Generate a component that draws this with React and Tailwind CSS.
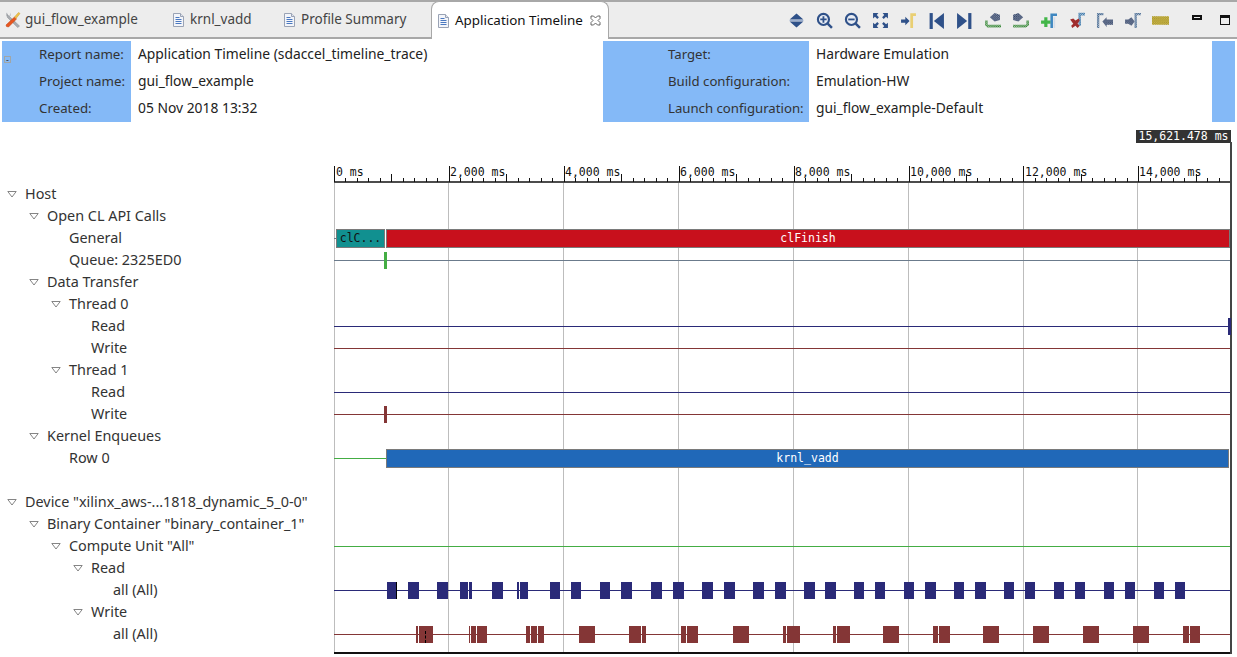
const FONT = "font-['Noto_Sans',sans-serif]";
const MONO = "font-['DejaVu_Sans_Mono',monospace]";

const NAVY = "#2a2a78";
const BROWN = "#843636";
const GREEN = "#44ad44";

const readBars = [
  [387, 397], [408, 419], [437, 448], [460, 468], [469, 472], [492, 503], [517, 519], [520, 528],
  [550, 560], [571, 581], [600, 610], [621, 632], [651, 662], [673, 684], [702, 713], [724, 735],
  [753, 764], [775, 786], [804, 815], [825, 836], [854, 864], [875, 885], [904, 914], [925, 936],
  [954, 964], [975, 986], [1004, 1014], [1025, 1035], [1054, 1064], [1075, 1085], [1104, 1114],
  [1125, 1135], [1154, 1164], [1175, 1185],
];

const writeBars = [
  [416, 418], [419, 433], [469, 470], [471, 476], [477, 487], [526, 530], [531, 537], [538, 544],
  [579, 595], [629, 641], [642, 646], [681, 686], [687, 698], [733, 749], [783, 786], [787, 800],
  [833, 836], [837, 850], [883, 899], [933, 938], [939, 950], [983, 999], [1033, 1049], [1083, 1099],
  [1133, 1149], [1183, 1189], [1190, 1200],
];

const tree = [
  { depth: 0, open: true, label: "Host" },
  { depth: 1, open: true, label: "Open CL API Calls" },
  { depth: 2, label: "General" },
  { depth: 2, label: "Queue: 2325ED0" },
  { depth: 1, open: true, label: "Data Transfer" },
  { depth: 2, open: true, label: "Thread 0" },
  { depth: 3, label: "Read" },
  { depth: 3, label: "Write" },
  { depth: 2, open: true, label: "Thread 1" },
  { depth: 3, label: "Read" },
  { depth: 3, label: "Write" },
  { depth: 1, open: true, label: "Kernel Enqueues" },
  { depth: 2, label: "Row 0" },
  { depth: 0, label: "" },
  { depth: 0, open: true, label: 'Device "xilinx_aws-...1818_dynamic_5_0-0"' },
  { depth: 1, open: true, label: 'Binary Container "binary_container_1"' },
  { depth: 2, open: true, label: 'Compute Unit "All"' },
  { depth: 3, open: true, label: "Read" },
  { depth: 4, label: "all (All)" },
  { depth: 3, open: true, label: "Write" },
  { depth: 4, label: "all (All)" },
];

const indent = ["pl-[8px]", "pl-[30px]", "pl-[52px]", "pl-[74px]", "pl-[96px]"];

const gridLines = [0, 114, 229, 344, 459, 574, 689, 803];

const rulerLabels = [
  "0 ms", "2,000 ms", "4,000 ms", "6,000 ms", "8,000 ms", "10,000 ms", "12,000 ms", "14,000 ms",
];

const DocIcon = () => (
  <svg width="11" height="14" viewBox="0 0 11 14" className="shrink-0">
    <path d="M.5.5h7l3 3v10H.5z" fill="#f3f5fa" stroke="#9aa3b5" />
    <path d="M7.5.5v3h3" fill="#dfe3ec" stroke="#9aa3b5" />
    <path d="M2.5 4.5h4M2.5 6.5h6M2.5 8.5h6M2.5 10.5h6" stroke="#4a78c0" />
  </svg>
);

// crossed wrench and screwdriver
const ToolsIcon = () => (
  <svg width="16" height="17" viewBox="0 0 16 17" className="shrink-0">
    <path d="M2 1.500l1 3-1.500 1L1 2.500zM6 1.500L5.500 5 4 5.500z" fill="#b9bcc0" />
    <path d="M2 3.500l2.500 2 10 9.500-1.800 1.500L2.500 6.500z" fill="#a9acb1" stroke="#85888c" strokeWidth=".5" />
    <path d="M1.500 15.500l-.5-1.500 8.500-8 2 2-8 8z" fill="#e8561f" stroke="#b83c10" strokeWidth=".5" />
    <path d="M9.500 6l4-4.500 1.500 1-4 5z" fill="#f2c24a" stroke="#c79a2a" strokeWidth=".5" />
  </svg>
);

const CloseIcon = () => (
  <svg width="11" height="11" viewBox="0 0 11 11" className="shrink-0">
    <path
      d="M1 1h2.500l2 2 2-2H10v2.500l-2 2 2 2V10H7.500l-2-2-2 2H1V7.500l2-2-2-2z"
      fill="#fff"
      stroke="#555"
      strokeWidth=".9"
    />
  </svg>
);

const Tab = ({ icon, label, className }) => (
  <div className={`flex items-center h-full whitespace-nowrap text-[#444] ${className}`}>
    {icon}
    <span>{label}</span>
  </div>
);

const Checker = ({ id, color, bg }) => (
  <pattern id={id} width="2" height="2" patternUnits="userSpaceOnUse">
    <rect width="2" height="2" fill={bg} />
    <rect width="1" height="1" fill={color} />
    <rect x="1" y="1" width="1" height="1" fill={color} />
  </pattern>
);

const BLUE = "#2f5189";

const toolbarIcons = [
  <>
    <path d="M8 1.500l6.500 5.500h-13zM8 14.500l6.500-5.500h-13z" fill={BLUE} />
    <path d="M1.500 8h13" stroke="#9db0cf" strokeWidth="1" />
  </>,
  <>
    <circle cx="7" cy="7" r="5.200" fill="#e9edf4" stroke={BLUE} strokeWidth="2" />
    <path d="M4 7h6M7 4v6" stroke={BLUE} strokeWidth="1.700" />
    <path d="M11 11l4 4" stroke={BLUE} strokeWidth="2.400" />
  </>,
  <>
    <circle cx="7" cy="7" r="5.200" fill="#e9edf4" stroke={BLUE} strokeWidth="2" />
    <path d="M4 7h6" stroke={BLUE} strokeWidth="1.700" />
    <path d="M11 11l4 4" stroke={BLUE} strokeWidth="2.400" />
  </>,
  <>
    <path d="M1 1h5L4.500 2.800 6.500 5 5 6.500 2.800 4.500 1 6zM15 1v5l-1.800-1.500L11 6.500 9.500 5l2-2.200L10 1zM1 15v-5l1.800 1.500L5 9.500 6.500 11l-2 2.200L6 15zM15 15h-5l1.500-1.800-2-2.200L11 9.500l2.200 2L15 10z" fill={BLUE} />
  </>,
  <>
    <path d="M1 7h4V4.500L9 8.500l-4 4V10H1z" fill={BLUE} />
    <path d="M11 15V2.500h4" fill="none" stroke="#e9cf73" strokeWidth="2.600" />
  </>,
  <>
    <path d="M1.500 1h3v15h-3z" fill={BLUE} />
    <path d="M15 1v15L5.500 8.500z" fill={BLUE} />
  </>,
  <>
    <path d="M11.500 1h3v15h-3z" fill={BLUE} />
    <path d="M1 1v15l9.500-7.500z" fill={BLUE} />
  </>,
  <>
    <defs>
      <Checker id="g1" color="#2f7d2f" bg="#a9cfa9" />
      <Checker id="n1" color="#26365a" bg="#8d99b0" />
    </defs>
    <path d="M1 8h2.500v4H16v2.500H3L1 12.500z" fill="url(#g1)" />
    <path d="M5.500 5L10 1l5 1.500v5L10 9z" fill="url(#n1)" />
  </>,
  <>
    <defs>
      <Checker id="g2" color="#2f7d2f" bg="#a9cfa9" />
      <Checker id="n2" color="#26365a" bg="#8d99b0" />
    </defs>
    <path d="M16 8h-2.500v4H1v2.500h12l3-2z" fill="url(#g2)" />
    <path d="M10.500 5L6 1 1 2.500v5L6 9z" fill="url(#n2)" />
  </>,
  <>
    <path d="M1 8h3V5h3v3h3v3H7v3H4v-3H1z" fill="#43b649" />
    <path d="M11 15V2.500h5" fill="none" stroke="#3f87c0" strokeWidth="2.400" />
    <path d="M13.500 15V5" stroke="#d3dce8" strokeWidth="1.500" />
  </>,
  <>
    <defs>
      <Checker id="b3" color="#2f6ca0" bg="#a8c4dc" />
    </defs>
    <path d="M11 13V2h5" fill="none" stroke="url(#b3)" strokeWidth="2.400" />
    <path d="M2 7l3-1 2 2 3-2 1 2-2 3 2 2-2 2-2-2-3 2-1-2 2-2z" fill="#a02d2d" />
  </>,
  <>
    <defs>
      <Checker id="b4" color="#3c5f88" bg="#b5c3d4" />
      <Checker id="n4" color="#26365a" bg="#8d99b0" />
    </defs>
    <path d="M2 15V2h5" fill="none" stroke="url(#b4)" strokeWidth="2.200" />
    <path d="M6 9l4-4v2h6v5h-6v2z" fill="url(#n4)" />
  </>,
  <>
    <defs>
      <Checker id="b5" color="#3c5f88" bg="#b5c3d4" />
      <Checker id="n5" color="#26365a" bg="#8d99b0" />
    </defs>
    <path d="M11 15V2h5" fill="none" stroke="url(#b5)" strokeWidth="2.200" />
    <path d="M1 7h3l3-2 3 4-3 4-3-2H1z" fill="url(#n5)" />
  </>,
  <>
    <defs>
      <Checker id="y6" color="#8c7a1e" bg="#e6d25a" />
    </defs>
    <rect y="4" width="16" height="8" fill="url(#y6)" />
  </>,
];

const Triangle = () => (
  <svg width="10" height="7" viewBox="0 0 10 7" className="shrink-0 -ml-px">
    <path d="M.8.500h8.400L5 6z" fill="#fff" stroke="#777" strokeWidth=".9" />
  </svg>
);

const TreeRow = ({ depth, open, label }) => (
  <div className={`flex items-center h-[22px] gap-[8px] text-[#333] whitespace-nowrap ${indent[depth]}`}>
    {open ? <Triangle /> : <span className="w-[9px] shrink-0" />}
    <span>{label}</span>
  </div>
);

const Line = ({ color, to }) => (
  <div className="absolute left-0 top-[11px] h-px" style={{ backgroundColor: color, width: to ?? 896 }} />
);

const Bar = ({ from, to, color }) => (
  <div
    className="absolute top-[3px] h-[17px]"
    style={{ left: from - 334, width: to - from, backgroundColor: color }}
  />
);

const LabeledBar = ({ from, to, color, label, dark }) => (
  <div
    className={`absolute flex items-center justify-center border border-[#7a7a7a] overflow-hidden text-[11.500px] ${MONO} ${
      dark ? "text-[#111]" : "text-white"
    }`}
    style={{ left: from - 334, width: to - from, top: 2, height: 19, backgroundColor: color }}
  >
    {label}
  </div>
);

const Row = ({ children }) => <div className="relative h-[22px]">{children}</div>;

const Ruler = () => {
  const ticks = [];
  for (let i = 0; i <= 77; i++) {
    const x = 0.5 + Math.round(i * 11.49);
    const h = i % 10 === 0 ? 16 : i % 5 === 0 ? 8 : 4;
    ticks.push(<path key={i} d={`M${x} ${17 - h}V17`} stroke="#111" />);
  }
  return (
    <div className="relative h-[18px]">
      <svg width="897" height="18" className="absolute left-0 top-0">
        {ticks}
        <path d="M0 17H896" stroke="#111" strokeWidth="1.500" />
      </svg>
      {rulerLabels.map((label, i) => (
        <span
          key={label}
          className={`absolute top-[-2px] text-[11.500px] leading-[18px] text-[#111] whitespace-nowrap ${MONO}`}
          style={{ left: gridLines[i] + 2 }}
        >
          {label}
        </span>
      ))}
    </div>
  );
};

export default function App() {
  return (
    <div className={`w-[1237px] h-[657px] overflow-hidden bg-white text-[13.500px] ${FONT}`}>
      {/* Tab bar */}
      <div className="flex items-stretch h-[39px] bg-[#ededed] border-t-2 border-b-2 border-[#a8a8a8]">
        <div className="flex items-center w-[431px]">
          <Tab icon={<ToolsIcon />} label="gui_flow_example" className="gap-[4px] pl-[5px] w-[173px]" />
          <Tab icon={<DocIcon />} label="krnl_vadd" className="gap-[6px] w-[111px]" />
          <Tab icon={<DocIcon />} label="Profile Summary" className="gap-[6px]" />
        </div>
        <div className="flex items-center w-[178px] h-[38px] -mt-[1px] pl-[6px] bg-white border border-b-0 border-[#a8a8a8] rounded-t-[8px] text-[#111] whitespace-nowrap">
          <DocIcon />
          <span className="ml-[6px] text-[13.400px]">Application Timeline</span>
          <span className="ml-[7px]">
            <CloseIcon />
          </span>
        </div>
        <div className="flex items-center ml-auto pr-[7px] pt-px">
          {toolbarIcons.map((icon, i) => (
            <div key={i} className="flex items-center justify-center w-[28px]">
              <svg width="17" height="17" viewBox="0 0 16 16">
                {icon}
              </svg>
            </div>
          ))}
          <div className="w-[10px] h-[5px] ml-[18px] -mt-[6px] border-2 border-[#111]" />
          <div className="w-[10px] h-[10px] ml-[18px] border border-t-[3px] border-[#111]" />
        </div>
      </div>

      {/* Report header */}
      <div className="grid grid-cols-[129px_472px_206px_403px_23px] h-[80px] ml-[2px] mt-[2px] text-[#333]">
        <div className="relative flex flex-col justify-center pl-[37px] bg-[#84b9f7] text-[13.300px]">
          {["Report name:", "Project name:", "Created:"].map((t) => (
            <div key={t} className="flex items-center h-[27px]">
              {t}
            </div>
          ))}
          <div className="absolute left-[2px] top-[15px] flex items-center justify-center w-[7px] h-[7px] border border-[#a0a6a8] text-[9px] leading-none text-[#333]">
            -
          </div>
        </div>
        <div className="flex flex-col justify-center pl-[7px] text-[13.850px] text-[#222]">
          {["Application Timeline (sdaccel_timeline_trace)", "gui_flow_example", "05 Nov 2018 13:32"].map((t) => (
            <div key={t} className="flex items-center h-[27px]">
              {t}
            </div>
          ))}
        </div>
        <div className="flex flex-col justify-center pl-[65px] bg-[#84b9f7] text-[13.200px] whitespace-nowrap">
          {["Target:", "Build configuration:", "Launch configuration:"].map((t) => (
            <div key={t} className="flex items-center h-[27px]">
              {t}
            </div>
          ))}
        </div>
        <div className="flex flex-col justify-center pl-[7px] text-[13.800px] text-[#222]">
          {["Hardware Emulation", "Emulation-HW", "gui_flow_example-Default"].map((t) => (
            <div key={t} className="flex items-center h-[27px]">
              {t}
            </div>
          ))}
        </div>
        <div className="bg-[#84b9f7]" />
      </div>

      {/* Timeline */}
      <div className="flex">
        <div className="w-[334px] shrink-0 pt-[62px] text-[14.400px]">
          {tree.map((row, i) => (
            <TreeRow key={i} {...row} />
          ))}
        </div>

        <div className="relative w-[897px] pt-[44px]">
          {/* end marker */}
          <div
            className={`absolute left-[802px] top-[9px] w-[95px] h-[13px] flex items-center justify-center bg-[#333] text-white text-[11.500px] whitespace-nowrap ${MONO}`}
          >
            15,621.478 ms
          </div>
          <div className="absolute left-[896px] top-[21px] bottom-0 w-[2px] bg-[#444]" />

          <Ruler />

          <div className="relative border-b-2 border-[#111] h-[471px] w-[896px]">
            {gridLines.map((x) => (
              <div key={x} className="absolute top-0 bottom-0 w-px bg-[#bdbdbd]" style={{ left: x }} />
            ))}

            <Row />
            <Row />
            <Row>
              <Line color="#6b7b8c" to={3} />
              <LabeledBar from={336} to={385} color="#119090" label="clC..." dark />
              <LabeledBar from={386} to={1230} color="#c8101c" label="clFinish" />
            </Row>
            <Row>
              <Line color="#6b7b8c" />
              <Bar from={384} to={387} color={GREEN} />
            </Row>
            <Row />
            <Row />
            <Row>
              <Line color={NAVY} />
              <Bar from={1228} to={1231} color={NAVY} />
            </Row>
            <Row>
              <Line color={BROWN} />
            </Row>
            <Row />
            <Row>
              <Line color={NAVY} />
            </Row>
            <Row>
              <Line color={BROWN} />
              <Bar from={384} to={387} color={BROWN} />
            </Row>
            <Row />
            <Row>
              <Line color={GREEN} to={52} />
              <LabeledBar from={386} to={1229} color="#2068b8" label="krnl_vadd" />
            </Row>
            <Row />
            <Row />
            <Row />
            <Row>
              <Line color={GREEN} />
            </Row>
            <Row />
            <Row>
              <Line color={NAVY} />
              {readBars.map(([from, to]) => (
                <Bar key={from} from={from} to={to} color={NAVY} />
              ))}
              <Bar from={396} to={397} color="#000" />
            </Row>
            <Row />
            <Row>
              <Line color={BROWN} />
              {writeBars.map(([from, to]) => (
                <Bar key={from} from={from} to={to} color={BROWN} />
              ))}
              <div className="absolute left-[91px] top-[8px] h-[12px] border-l border-dashed border-black" />
            </Row>
          </div>
        </div>
      </div>
    </div>
  );
}
